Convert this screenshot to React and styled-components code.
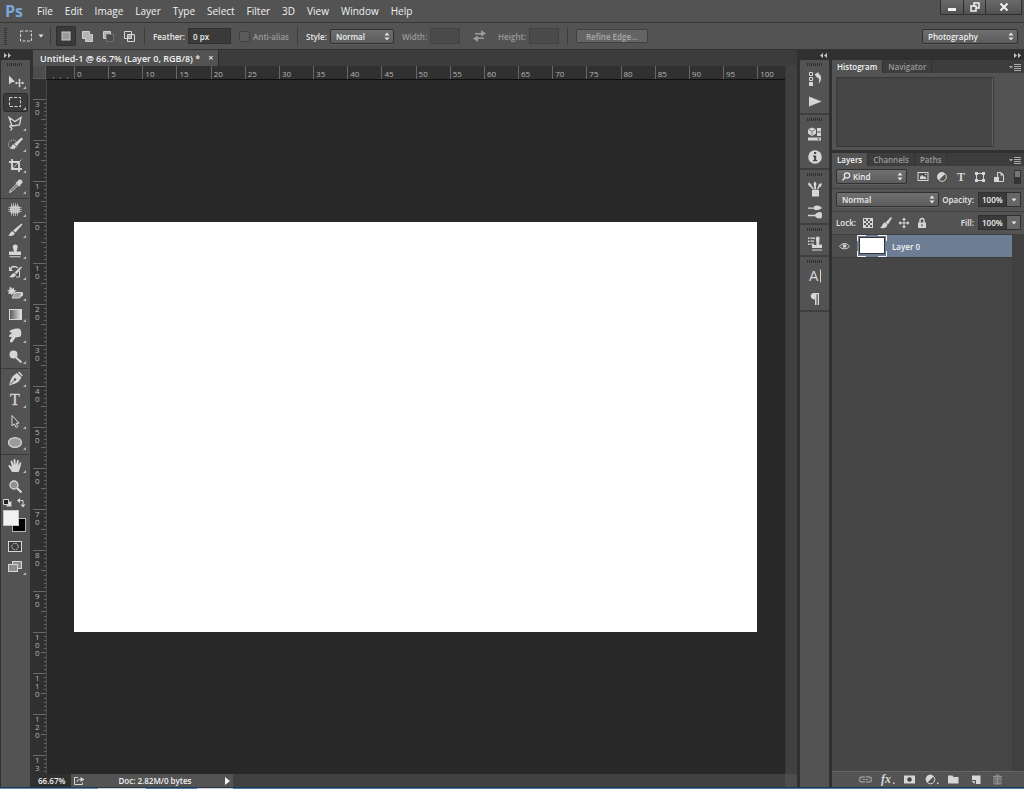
import React, { useState } from "react"
import styled, { createGlobalStyle, css } from "styled-components"

const GlobalStyle = createGlobalStyle`
    * {
        box-sizing: border-box;
    }
    body {
        margin: 0;
        background: #282828;
        color: #e0e0e0;
        font-family: "Open Sans", "Noto Sans", sans-serif;
        font-size: 8px;
    }
    button, input, select {
        font: inherit;
        color: inherit;
        margin: 0;
        padding: 0;
        border: 0;
        background: none;
        border-radius: 0;
    }
    svg {
        display: block;
        flex: none;
    }
`

const Window = styled.div`
    display: flex;
    flex-direction: column;
    height: 100vh;
    overflow: hidden;
`

/* menu bar */
const MenuBar = styled.header`
    display: flex;
    align-items: center;
    flex: none;
    height: 22px;
    background: #535353;
`
const Logo = styled.span`
    width: 31px;
    padding-left: 5px;
    color: #7ba7d7;
    font-family: "Open Sans", sans-serif;
    font-size: 16px;
    font-weight: 700;
    line-height: 20px;
`
const Menu = styled.nav`
    display: flex;
    flex: 1;
`
const MenuItem = styled.button`
    padding: 0 6px;
    font-size: 10px;
    line-height: 20px;
    color: #f2f2f2;
`
const WindowButtons = styled.div`
    display: flex;
    align-self: flex-start;
    margin-right: 2px;
    border: 1px solid #2f2f2f;
    border-top: 0;
`
const WindowButton = styled.button`
    display: grid;
    place-items: center;
    width: ${p => p.$wide ? "36px" : "22px"};
    height: 14px;
    background: linear-gradient(#6a6a6a, #525252);
    & + & {
        border-left: 1px solid #2f2f2f;
    }
`

/* options bar */
const OptionsBar = styled.div`
    display: flex;
    align-items: center;
    flex: none;
    height: 27px;
    padding: 0 6px 0 4px;
    border-top: 1px solid #383838;
    background: #535353;
    font-weight: 600;
    white-space: nowrap;
`
const OptionGroup = styled.div`
    display: flex;
    align-items: center;
    gap: ${p => p.$gap || "3px"};
    padding: 0 ${p => p.$pad || "8px"};
    height: 18px;
    & + & {
        border-left: 1px solid #3c3c3c;
    }
`
const Grip = styled.span`
    width: 3px;
    height: 17px;
    background: repeating-linear-gradient(#333 0 1px, #535353 1px 2px);
`
const ModeButton = styled.button`
    display: grid;
    place-items: center;
    width: 20px;
    height: 20px;
    border-radius: 2px;
    ${p => p.$active && css`
        background: #3a3a3a;
        box-shadow: inset 0 0 0 1px #2f2f2f;
    `}
`
const Label = styled.label`
    color: ${p => p.$dim ? "#9a9a9a" : "#e8e8e8"};
    font-weight: 600;
`
const Field = styled.input`
    width: ${p => p.$width || "30px"};
    height: 16px;
    padding: 0 4px;
    border: 1px solid #303030;
    background: #3a3a3a;
    color: #f0f0f0;
    &:disabled {
        background: #4b4b4b;
        border-color: #424242;
    }
`
const Check = styled.input`
    appearance: none;
    width: 11px;
    height: 11px;
    border: 1px solid #424242;
    border-radius: 2px;
    background: #5a5a5a;
`
const SelectBox = styled.span`
    display: grid;
    align-items: center;
    width: ${p => p.$width};
    height: 15px;
    border: 1px solid #303030;
    border-radius: 2px;
    background: linear-gradient(#707070, #5c5c5c);
    box-shadow: 0 1px 0 #606060;
    & > * {
        grid-area: 1 / 1;
    }
    & > svg {
        justify-self: end;
        margin-right: 3px;
        pointer-events: none;
    }
    & > svg:first-child {
        justify-self: start;
        margin-left: 5px;
    }
`
const SelectInput = styled.select`
    appearance: none;
    width: 100%;
    height: 13px;
    padding-left: ${p => p.$indent || "5px"};
    color: #f0f0f0;
    font-weight: 600;
    outline: 0;
    option {
        background: #535353;
    }
`
const PushButton = styled.button`
    width: 72px;
    height: 14px;
    border: 1px solid #404040;
    border-radius: 2px;
    background: #646464;
    color: #a8a8a8;
`
const Spacer = styled.span`
    flex: 1 0 2px;
`

/* work area */
const Workspace = styled.main`
    display: flex;
    flex: 1;
    min-height: 0;
    border-top: 1px solid #323232;
    background: #303030;
`
const ToolColumn = styled.aside`
    display: flex;
    flex-direction: column;
    flex: none;
    width: 33px;
    padding: 0 3px 0 1px;
`
const CollapseBar = styled.div`
    display: flex;
    align-items: center;
    justify-content: space-between;
    flex: none;
    height: 10px;
    padding: 0 3px;
`
const CollapseButton = styled.button`
    display: grid;
    place-items: center;
    height: 10px;
    margin-left: ${p => p.$shift || "0"};
`
const Tools = styled.div`
    display: flex;
    flex-direction: column;
    align-items: flex-start;
    flex: 1;
    background: #535353;
`
const HGrip = styled.span`
    width: 16px;
    height: 3px;
    margin: ${p => p.$margin || "0 0 1px"};
    background: repeating-linear-gradient(90deg, #2f2f2f 0 1px, #535353 1px 2px);
`
const ToolGroup = styled.div`
    padding-bottom: 1px;
    & + & {
        border-top: 1px solid #3a3a3a;
    }
`
const ToolButton = styled.button`
    display: block;
    width: 28px;
    height: 21px;
    svg rect.well {
        display: ${p => p.$active ? "inline" : "none"};
    }
`

const DocumentColumn = styled.section`
    display: flex;
    flex-direction: column;
    flex: 1;
    min-width: 0;
`
const TabStrip = styled.div`
    display: flex;
    flex: none;
    height: 16px;
    background: #3c3c3c;
`
const DocumentTab = styled.div`
    display: flex;
    align-items: center;
    gap: 8px;
    padding: 0 5px 0 7px;
    background: #535353;
    border-right: 1px solid #2c2c2c;
    color: #f2f2f2;
    font-size: 9px;
    font-weight: 600;
    white-space: nowrap;
`
const TabClose = styled.button`
    font-size: 9px;
    line-height: 14px;
`
const Stage = styled.div`
    display: grid;
    grid-template-columns: 14px minmax(0, 1fr) 12px;
    grid-template-rows: 14px minmax(0, 1fr);
    flex: 1;
    min-height: 0;
    background: #303030;
`
const RulerCorner = styled.div`
    margin: 0 1px 1px 0;
    background: #4c4c4c;
    border-right: 1px dotted #6b6b6b;
    border-bottom: 1px dotted #6b6b6b;
`
const TopRuler = styled.div`
    display: flex;
    border-bottom: 1px solid #0f0f0f;
    overflow: hidden;
    color: #b4b4b4;
    font-size: 8px;
`
const TopCell = styled.div`
    display: grid;
    flex: ${p => p.$last ? "none" : "1"};
    width: ${p => p.$last ? "28px" : "auto"};
    min-width: 0;
    border-left: 1px solid #686868;
    & > * {
        grid-area: 1 / 1;
    }
`
const TopLabel = styled.span`
    z-index: 1;
    padding-left: 2px;
    line-height: 16px;
`
const TopTicks = styled.span`
    display: flex;
    align-self: end;
    width: ${p => p.$width || "auto"};
    height: 2px;
    i {
        flex: 1;
    }
    i + i {
        border-left: 1px solid #686868;
    }
`
const SideRuler = styled.div`
    padding-top: 19px;
    overflow: hidden;
    border-right: 1px solid #484848;
    color: #b4b4b4;
    font-size: 8px;
`
const SideCell = styled.div`
    display: flex;
    justify-content: space-between;
    height: 41px;
    border-top: 1px solid #686868;
`
const SideLabel = styled.span`
    width: 5px;
    margin-left: 2px;
    line-height: 8px;
    word-break: break-all;
`
const SideTicks = styled.span`
    display: flex;
    flex-direction: column;
    align-items: flex-end;
    i {
        flex: 1;
        width: 2px;
    }
    i + i {
        border-top: 1px solid #686868;
    }
    i:nth-child(6) {
        width: 5px;
    }
`
const Canvas = styled.div`
    display: flex;
    align-items: center;
    padding: 0 28px 0 27px;
    background: #282828;
`
const Artboard = styled.div`
    flex: 1;
    aspect-ratio: 5 / 3;
    background: #fff;
`
const ScrollTrack = styled.div`
    grid-row: 1 / 3;
    grid-column: 3;
    background: #404040;
    border-left: 1px solid #383838;
`
const StatusBar = styled.footer`
    display: flex;
    flex: none;
    height: 13px;
    background: #404040;
    color: #f0f0f0;
    font-weight: 600;
    line-height: 12px;
`
const ZoomLevel = styled.input`
    width: 38px;
    padding-left: 5px;
    background: #303030;
`
const DocInfo = styled.div`
    display: flex;
    align-items: center;
    justify-content: space-between;
    width: 162px;
    padding: 0 3px 0 2px;
    background: #535353;
`
const ResizeCorner = styled.span`
    width: 12px;
    margin-left: auto;
    background: #4d4d4d;
`

/* right side */
const Docks = styled.aside`
    display: flex;
    flex-direction: column;
    flex: none;
    width: 227px;
    padding-left: 3px;
`
const DockRow = styled.div`
    display: flex;
    flex: 1;
    gap: 3px;
    min-height: 0;
`
const IconDock = styled.div`
    width: 29px;
    background: #535353;
`
const DockGroup = styled.div`
    display: flex;
    flex-direction: column;
    align-items: center;
    padding-top: 3px;
    border-bottom: 2px solid #3f3f3f;
`
const DockButton = styled.button`
    display: grid;
    place-items: center;
    width: 27px;
    height: 23px;
`
const Panels = styled.div`
    display: flex;
    flex-direction: column;
    flex: 1;
    min-width: 0;
    gap: 3px;
`
const Panel = styled.section`
    display: flex;
    flex-direction: column;
    flex: ${p => p.$grow ? "1" : "none"};
    min-height: 0;
    background: #535353;
`
const PanelTabs = styled.div`
    display: flex;
    align-items: center;
    flex: none;
    height: 13px;
    padding-right: 3px;
    background: #3d3d3d;
`
const PanelTab = styled.button`
    height: 13px;
    padding: 0 5px;
    border-right: 1px solid #333;
    background: ${p => p.$active ? "#535353" : "none"};
    color: ${p => p.$active ? "#f4f4f4" : "#9a9a9a"};
    font-weight: 600;
`
const HistogramBox = styled.div`
    width: 158px;
    height: 70px;
    margin: 4px 4px 3px;
    border: 1px solid #3a3a3a;
    background: #464646;
    box-shadow: inset -1px 0 0 #5c6658, inset 0 0 0 1px #424242;
`
const LayerRow = styled.div`
    display: flex;
    align-items: center;
    justify-content: space-between;
    flex: none;
    height: 23px;
    padding: 0 3px 1px 4px;
    border-bottom: 1px solid #404040;
`
const Inline = styled.div`
    display: flex;
    align-items: center;
    gap: ${p => p.$gap || "4px"};
`
const IconButton = styled.button`
    display: grid;
    place-items: center;
    opacity: ${p => p.$dim ? "0.5" : "1"};
`
const NumberBox = styled.span`
    display: flex;
    height: 15px;
    border: 1px solid #303030;
    input {
        width: 27px;
        padding-left: 3px;
        background: #3a3a3a;
        color: #f4f4f4;
        font-weight: 600;
    }
    button {
        display: grid;
        place-items: center;
        width: 14px;
        background: #666;
        border-left: 1px solid #303030;
    }
`
const LayerList = styled.ul`
    flex: 1;
    min-height: 0;
    margin: 0;
    padding: 0;
    list-style: none;
    background: #464646;
    border-right: 12px solid #404040;
`
const LayerItem = styled.li`
    display: flex;
    align-items: center;
    height: 23px;
    border-bottom: 1px solid #3a3a3a;
    background: #6d7d93;
    color: #f4f4f4;
    font-weight: 600;
`
const EyeCell = styled.button`
    display: grid;
    place-items: center;
    width: 25px;
    height: 22px;
    background: #4d4d4d;
`
const Thumb = styled.svg`
    margin-right: 5px;
`
const PanelFooter = styled.div`
    display: flex;
    align-items: center;
    justify-content: flex-end;
    flex: none;
    gap: 7px;
    height: 16px;
    padding-right: 19px;
    border-top: 1px solid #656565;
`
const TaskbarEdge = styled.div`
    flex: none;
    height: 2px;
    border-top: 1px solid #253748;
    background: linear-gradient(90deg, #5d8fb8 0 98px, #c9ccd4 98px 146px, #4f81ae 146px 197px, #c9ccd4 197px 233px, #4a7dab 233px);
`

const L = "#d6d6d6"

const Arrows = () => (
  <svg width="6" height="9" viewBox="0 0 6 9" fill="#e4e4e4"><path d="M.5 3.500 3 .5 5.500 3.500zM.5 5.500 3 8.500 5.500 5.500z" /></svg>
)
const Down = () => (
  <svg width="6" height="4" viewBox="0 0 6 4" fill="#e4e4e4"><path d="M.5 .5h5L3 3.500z" /></svg>
)
const Chevrons = ({ left }) => (
  <svg width="7" height="5" viewBox="0 0 7 5" fill="#c4c4c4">
    <path d={left ? "M3 0v5L0 2.500zM7 0v5L4 2.500z" : "M0 0v5l3-2.500zM4 0v5l3-2.500z"} />
  </svg>
)
const PanelMenuIcon = () => (
  <svg width="12" height="8" viewBox="0 0 12 8" fill="#aaa"><path d="M0 3h4L2 5.500zM5 1h7v1H5zM5 3h7v1H5zM5 5h7v1H5zM5 7h7v1H5z" /></svg>
)

const BrushShape = () => (
  <g fill={L}>
    <path d="M20.500 3.500 21.500 4.500 14.500 12.500 12 10.500z" />
    <path d="M11.500 11.200 13.800 13.200C13 16 10 16.500 7 15.500c2-.5 2-4 4.500-4.300z" />
  </g>
)

const toolGroups = [
  [
    { name: "Move", icon: <><path d="M8 4.500v9l2.200-2 3.800-.8z" fill={L} /><path d="M18.500 8v8M14.500 12h8" stroke={L} /><path d="M17 9.500 18.500 7.500 20 9.500zM17 14.500l1.500 2 1.500-2zM16 10.500 14 12l2 1.500zM21 10.500l2 1.500-2 1.500z" fill={L} /></> },
    { name: "Rectangular Marquee", icon: <rect x="8.500" y="5.500" width="11" height="9" fill="none" stroke={L} strokeDasharray="3 1.600" /> },
    { name: "Polygonal Lasso", icon: <path d="M8 4.500 14 8.500 20 4.500 18.500 12 11 13zM11 13c-2-1.500-3 1-1 1.500 1.500.5 1 1.500-.5 3" fill="none" stroke={L} strokeWidth="1.300" /> },
    { name: "Quick Selection", icon: <><circle cx="12" cy="10.500" r="4.500" fill="none" stroke={L} strokeDasharray="1 1.300" /><path d="M20.500 3.500 22 5 15.500 12 13 10zM12.500 10.200l2.500 2.200c-1 2.300-3 2.800-6.500 1.800 2-.5 2-3.500 4-4z" fill={L} /></> },
    { name: "Crop", icon: <><path d="M11 4v10h10M8 7h10v10" fill="none" stroke={L} strokeWidth="1.800" /><path d="M20.500 4.500l-9 9" stroke={L} strokeWidth=".8" /></> },
    { name: "Eyedropper", icon: <><path d="M17 4.500c1-1.500 3-1.500 4 0s.5 2.500-.8 3.500l-1.200 1 .5.800-1 1-4-4 1-1 .7.500z" fill={L} /><path d="M15.500 8 17 9.500 11 15.500 8.500 16.500 9.500 14z" fill="#777" stroke={L} strokeWidth=".9" /></> },
  ],
  [
    { name: "Patch", icon: <><rect x="9" y="6.500" width="10" height="8" rx="3" fill="#b4b4b4" /><path d="M10.500 4.500v12M12.500 4v13M14.500 4v13M16.500 4.500v12M7.500 8.500h13M7 10.500h14M7.500 12.500h13" stroke="#d0d0d0" strokeWidth=".7" /></> },
    { name: "Brush", icon: <BrushShape /> },
    { name: "Clone Stamp", icon: <path d="M12 7a2.500 2.500 0 1 1 4.500 0L15.500 10.500H20V14H8v-3.500h5zM8.500 15.200h11v1h-11z" fill={L} /> },
    { name: "History Brush", icon: <><path d="M9.500 6.500C11 4.500 14 4 17 6" fill="none" stroke={L} strokeWidth="1.300" /><path d="M8 4.500v4.500h4z" fill={L} /><path d="M20 4.500 21 5.500 15.500 12 13.500 10.500zM13 11l2 1.800c-1 3-4 3-7 2.200 2-.5 2.500-3.500 5-4z" fill={L} /><path d="M18.500 9v6h-3.500" fill="none" stroke={L} /></> },
    { name: "Background Eraser", icon: <><path d="M10 4l1 2 2-1.500v2.500l2.500.500-2 1.500 1 2-2.500-.5-1 2-1.500-2-2.500.5 1-2.200L6 7.500l2.500-.5V4.500z" fill={L} /><path d="M14.500 9.500H21L18.500 15H11z" fill="#a0a0a0" stroke={L} /><path d="M18.500 15 22 12.500V9.500h-1z" fill={L} /></> },
    { name: "Gradient", icon: <><defs><linearGradient id="grad"><stop offset="0" stopColor="#555" /><stop offset="1" stopColor="#e8e8e8" /></linearGradient></defs><rect x="8.500" y="5.500" width="12" height="10" fill="url(#grad)" stroke={L} /></> },
    { name: "Smudge", icon: <path d="M8.500 6C11 4 15 3 19 4l.5 1c1 1.500 1 4 .5 5.500-.5 1-1.500 1.500-2.500 1.500l-3 .5-3 4.500c-1.500 1-3 0-2.500-1.500l2-4c-1.500 1-3.500.5-3-1l3.500-3-2 .3z" fill={L} /> },
    { name: "Dodge", icon: <><circle cx="12.500" cy="8.500" r="4" fill={L} /><path d="M15 11.500l5.500 5" stroke={L} strokeWidth="1.800" /></> },
  ],
  [
    { name: "Pen", icon: <><path d="M16 4 20.500 8.500 19 10.500C18 13.500 14 15 8 16.500 9.500 11 11 7 14 5.500zM17 3.500 18.200 2.500 21.800 6.500 20.800 7.500z" fill={L} /><path d="M9 15.500 13.500 11" stroke="#535353" /><circle cx="14" cy="10.500" r="1.200" fill="#535353" /></> },
    { name: "Horizontal Type", letter: true },
    { name: "Path Selection", icon: <path d="M11 4.500v10.500l2.300-2.200 1.700 3.700 1.800-.8-1.600-3.500H18z" fill="#4b4b4b" stroke={L} /> },
    { name: "Ellipse", icon: <ellipse cx="14" cy="10.500" rx="6.500" ry="4.800" fill="#9c9c9c" stroke={L} strokeWidth="1.200" /> },
  ],
  [
    { name: "Hand", icon: <path d="M11 17C10 15 8 12.500 7.300 11c0-1.200 1.200-1.200 2-.3L11 12 9.600 6.500c0-1.200 1.500-1.200 1.800 0L12.700 10 12.600 4.800c.2-1.200 1.700-1.200 1.800 0L14.800 10l1.300-4.500c.5-1 1.800-.6 1.700.5L17 10.700l1.800-3c.7-.8 1.800-.1 1.400.8C19.500 11 19 14.500 17.500 17z" fill={L} /> },
    { name: "Zoom", icon: <><circle cx="13" cy="9" r="4" fill="#8f8f8f" stroke={L} strokeWidth="1.300" /><path d="M16 12l4.500 4.500" stroke={L} strokeWidth="2.200" /></>, plain: true },
  ],
]

const Tool = ({ tool, active, onClick }) => (
  <ToolButton type="button" aria-label={tool.name} $active={active} onClick={onClick}>
    <svg width="28" height="21" viewBox="0 0 28 21">
      <rect className="well" x="2.500" y="1.500" width="24" height="18" rx="2" fill="#3a3a3a" stroke="#2c2c2c" />
      {tool.letter ? <text x="14" y="15" textAnchor="middle" fontFamily="Liberation Serif, serif" fontSize="16" fill={L} stroke={L} strokeWidth=".3">T</text> : tool.icon}
      {!tool.plain && <path d="M25 15v3h-3z" fill="#b8b8b8" />}
    </svg>
  </ToolButton>
)

const dockGroups = [
  [
    ["History", <><path d="M2.500 1.500h3v3h-3zM2.500 6.500h3v3h-3z" fill="none" stroke={L} /><path d="M2 11h4v4H2zM7.500 3.500 11.500 1v2c3.500 1 3.500 7 0 9.500 1-3 1-5.500 0-6v1.500z" fill={L} /></>],
    ["Actions", <path d="M2 2.500v10l12.500-5z" fill={L} />],
  ],
  [
    ["Properties", <><path d="M5 2 8.500 3.500v4L5 9.500 1.500 7.500v-4z" fill={L} stroke={L} /><path d="M1.500 3.500 5 5.300l3.500-1.800M5 5.300v4" fill="none" stroke="#666" strokeWidth=".8" /><path d="M10 2h4v3.500h-4zM10 6.500h4V10h-4zM1 11.500h13v3H1z" fill={L} /><path d="M10 12.500h3l-1.500 1.500z" fill="#444" /></>],
    ["Info", <><circle cx="8" cy="8" r="6.800" fill={L} /><path d="M7 3h2.200v2H7zM6 6.500h3.200V11h1v1.200H6V11h1V7.700H6z" fill="#484848" /></>],
  ],
  [
    ["Brush Presets", <path d="M5 9h7v6.500H5zM6 8.500 2.500 5C1 4.500 1 3 1.500 1.500 3 2.500 4.500 2.500 4.500 4.500l3 4zM7.500 8.500 7 4.500C6 3 7 1.500 8 .5c1 1 2 2.500 1 4v4zM9.500 8.500l2-3.500c-.5-2 1.500-2 3-3 .5 2 0 4-2 4.200l-1.500 2.300z" fill={L} />],
    ["Brush", <path d="M1 3.500h6V2.300c3-1.300 5-.8 8 1.700-3 2.300-5 2.500-8 1.500V4.700H1zM1 10.700h7c1-1.700 3-2.700 5-2.700 1.500 0 2 1 2 3.200s-.5 3.300-2 3.300c-2 0-4-1-5-2.300H1z" fill={L} />],
  ],
  [
    ["Clone Source", <path d="M1 1.500h1.500V3H1zM3.500 1.500H8v1.200H3.500zM1 4.500h1.500V6H1zM3.500 4.500H7v1.200H3.500zM1 7.500h1.500V9H1zM3.500 7.500H7v1.200H3.500zM9 3.500a2 2 0 1 1 3.500 0L12 8.500h3V12H5V9h4.500zM5 13.500h10v1H5z" fill={L} />],
  ],
  [
    ["Character", <><text x="2" y="13" fontFamily="Liberation Sans, sans-serif" fontSize="14" fill={L}>A</text><path d="M13.500 1.500v13" stroke={L} /></>],
    ["Paragraph", <path d="M12 2v12h-1.300V3.200H9.500V14H8V8.500C2.500 8.500 2.500 2 7 2z" fill={L} />],
  ],
]

const modes = [
  ["New selection", <rect x="2" y="2" width="8" height="8" fill="#999" stroke="#c8c8c8" />],
  ["Add to selection", <><path d="M1.500 1.500h7v3h3v7h-7v-3h-3z" fill="#b4b4b4" stroke="#d0d0d0" /></>],
  ["Subtract from selection", <><path d="M1.500 8.500v-7h7v3h-4v4z" fill="#b4b4b4" stroke="#d0d0d0" /><path d="M4.500 4.500h7v7h-7z" fill="#4c4c4c" stroke="#707070" /></>],
  ["Intersect with selection", <><path d="M1.500 1.500h7v7h-7zM4.500 4.500h7v7h-7z" fill="none" stroke={L} /><path d="M5 5h3v3H5z" fill="#aaa" /></>],
]

const filters = [
  ["Pixel layers", <><rect x="1" y="1.500" width="10" height="8" fill="none" stroke={L} /><path d="M3 8V6l2-2 2 2 1-1 1.500 3zM8 3h1.500v1H8z" fill={L} /></>],
  ["Adjustment layers", <><circle cx="6" cy="6" r="4.300" fill="#535353" stroke={L} /><path d="M3 9A4.300 4.300 0 1 1 9 3z" fill={L} /></>],
  ["Type layers", <text x="6" y="10" textAnchor="middle" fontFamily="Liberation Serif, serif" fontWeight="bold" fontSize="12" fill={L}>T</text>],
  ["Shape layers", <><path d="M2.500 2.500h7v7h-7z" fill="none" stroke={L} /><path d="M1 1h3v3H1zM8 1h3v3H8zM1 8h3v3H1zM8 8h3v3H8z" fill={L} /></>],
  ["Smart objects", <><path d="M4.500 1.500H8L10.500 4v6.500h-6z" fill="none" stroke={L} /><path d="M1 6h5v5H1zM7.500 1v3.500H11z" fill={L} /></>],
]

const locks = [
  ["Lock transparent pixels", <><rect x="1" y="1" width="10" height="10" fill={L} /><path d="M2 2h2v2H2zM6 2h2v2H6zM4 4h2v2H4zM8 4h2v2H8zM2 6h2v2H2zM6 6h2v2H6zM4 8h2v2H4zM8 8h2v2H8z" fill="#555" /></>],
  ["Lock image pixels", <path d="M11 0 12 1 8 7.500 5.500 5.500zM5 5.500l2.500 2.200C7 11 3 12 0 10.800 2.500 10 2 6 5 5.500z" fill={L} />],
  ["Lock position", <><path d="M6 1.500v9M1.500 6h9" stroke={L} /><path d="M4 3 6 .5 8 3zM4 9l2 2.500L8 9zM3 4 .5 6 3 8zM9 4l2.500 2L9 8z" fill={L} /></>],
  ["Lock all", <><path d="M4 6V3.500a2 2 0 0 1 4 0V6" fill="none" stroke={L} strokeWidth="1.400" /><path d="M2 5.500h8V11H2z" fill={L} /><path d="M5.500 7h1v2.500h-1z" fill="#444" /></>],
]

const footerIcons = [
  ["Link layers", <><path d="M7 4H4a2.500 2.500 0 0 0 0 5h3M8 4h3a2.500 2.500 0 0 1 0 5H8" fill="none" stroke={L} strokeWidth="1.400" /><path d="M4.500 6.500h6" stroke={L} /></>, true],
  ["Add a layer style", <><text x="1" y="10" fontFamily="Liberation Serif, serif" fontStyle="italic" fontWeight="bold" fontSize="12" fill={L}>fx</text><path d="M13 9.500h1.500V11H13z" fill={L} /></>],
  ["Add layer mask", <><rect x="2" y="2.500" width="11" height="8" fill={L} /><circle cx="7.500" cy="6.500" r="2.300" fill="#444" /></>],
  ["New adjustment layer", <><circle cx="6.500" cy="6.500" r="4.300" fill="#535353" stroke={L} /><path d="M3.500 9.500a4.300 4.300 0 1 1 6-6z" fill={L} /><path d="M13 9.500h1.500V11H13z" fill={L} /></>],
  ["New group", <path d="M2 2.500h4.500L7.500 4h5v6.500H2z" fill={L} />],
  ["New layer", <><path d="M4 2.500h8.500v8.500H8V7H4z" fill={L} /><path d="M3.500 8h3.300v3z" fill={L} /></>],
  ["Delete layer", <path d="M3 3.500h9M6 3V2h3v1M4 5h7v6H4zM6 5v6M7.500 5v6M9 5v6" fill="none" stroke={L} />, true],
]

const Dropdown = ({ id, label, width, options, icon, indent }) => (
  <SelectBox $width={width}>
    {icon}
    <SelectInput id={id} aria-label={label} $indent={indent}>
      {options.map(o => <option key={o}>{o}</option>)}
    </SelectInput>
    <Arrows />
  </SelectBox>
)

const menus = ["File", "Edit", "Image", "Layer", "Type", "Select", "Filter", "3D", "View", "Window", "Help"]
const topMarks = Array.from({ length: 21 }, (_, i) => i * 5)
const sideMarks = [30, 20, 10, 0, 10, 20, 30, 40, 50, 60, 70, 80, 90, 100, 110, 120, 130]

function App() {
  const [tool, setTool] = useState("Rectangular Marquee")
  const [mode, setMode] = useState("New selection")

  return (
    <Window>
      <GlobalStyle />
      <MenuBar>
        <Logo>Ps</Logo>
        <Menu>
          {menus.map(m => <MenuItem key={m} type="button">{m}</MenuItem>)}
        </Menu>
        <WindowButtons>
          <WindowButton type="button" aria-label="Minimize">
            <svg width="10" height="10" viewBox="0 0 10 10"><path d="M1 6h8v3H1z" fill="#f2f2f2" /></svg>
          </WindowButton>
          <WindowButton type="button" aria-label="Restore">
            <svg width="10" height="10" viewBox="0 0 10 10" fill="none" stroke="#f2f2f2" strokeWidth="1.500"><path d="M4 4V1h5v5H6.500M1 4h5v5H1z" /></svg>
          </WindowButton>
          <WindowButton type="button" aria-label="Close" $wide>
            <svg width="10" height="10" viewBox="0 0 10 10" stroke="#f2f2f2" strokeWidth="2"><path d="M1.500 1.500l7 7M8.500 1.500l-7 7" /></svg>
          </WindowButton>
        </WindowButtons>
      </MenuBar>

      <OptionsBar>
        <Grip />
        <OptionGroup $gap="5px" $pad="6px">
          <svg width="20" height="12" viewBox="0 0 20 12"><rect x="7.500" y="1" width="11" height="10" fill="none" stroke={L} strokeDasharray="3 1.500" /></svg>
          <Down />
        </OptionGroup>
        <OptionGroup $gap="1px" $pad="5px">
          {modes.map(([name, icon]) => (
            <ModeButton key={name} type="button" aria-label={name} $active={mode === name} onClick={() => setMode(name)}>
              <svg width="13" height="13" viewBox="0 0 13 13">{icon}</svg>
            </ModeButton>
          ))}
        </OptionGroup>
        <OptionGroup>
          <Label htmlFor="feather">Feather:</Label>
          <Field id="feather" $width="43px" defaultValue="0 px" />
          <Spacer />
          <Check id="alias" type="checkbox" disabled />
          <Label htmlFor="alias" $dim>Anti-alias</Label>
        </OptionGroup>
        <OptionGroup>
          <Label htmlFor="style">Style:</Label>
          <Dropdown id="style" width="64px" options={["Normal", "Fixed Ratio", "Fixed Size"]} />
          <Spacer />
          <Label htmlFor="w" $dim>Width:</Label>
          <Field id="w" disabled />
          <IconButton type="button" aria-label="Swap height and width">
            <svg width="32" height="12" viewBox="0 0 32 12" fill="#9c9c9c"><path d="M12 3h6V0l5 3.500-5 3V4.500h-6zM21 7.500h-6V5.500l-5 3 5 3.500V9h6z" /></svg>
          </IconButton>
          <Label htmlFor="h" $dim>Height:</Label>
          <Field id="h" disabled />
        </OptionGroup>
        <OptionGroup>
          <PushButton type="button">Refine Edge...</PushButton>
        </OptionGroup>
        <Spacer />
        <Dropdown label="Workspace" width="96px" options={["Photography", "Essentials", "Painting"]} />
      </OptionsBar>

      <Workspace>
        <ToolColumn>
          <CollapseBar><CollapseButton type="button" aria-label="Expand tools"><Chevrons /></CollapseButton></CollapseBar>
          <Tools>
            <HGrip $margin="3px 0 5px 6px" />
            {toolGroups.map((group, i) => (
              <ToolGroup key={i}>
                {group.map(t => <Tool key={t.name} tool={t} active={tool === t.name} onClick={() => setTool(t.name)} />)}
              </ToolGroup>
            ))}
            <svg width="28" height="38" viewBox="0 0 28 38">
              <path d="M5.500 3.500h5v5h-5z" fill="#ddd" stroke="#888" />
              <path d="M2.500 1.500h5v5h-5z" fill="#222" stroke={L} />
              <path d="M18.500 2.500h3.500v4" fill="none" stroke={L} /><path d="M16 2.500 19 0v5zM22 9.500 19.500 6.500h5z" fill={L} />
              <rect x="11.500" y="20.500" width="13" height="13" fill="#000" stroke="#b4b4b4" />
              <rect x="2.500" y="12.500" width="15" height="15" fill="#f2f2f2" stroke="#c4c4c4" />
            </svg>
            <Tool tool={{ name: "Quick Mask", plain: true, icon: <><rect x="7.500" y="5.500" width="13" height="10" fill="#3c3c3c" stroke={L} /><circle cx="14" cy="10.500" r="3.200" fill="none" stroke={L} strokeDasharray="1.500 1" /></> }} />
            <Tool tool={{ name: "Screen Mode", icon: <><rect x="11.500" y="4.500" width="9" height="7" fill="#8c8c8c" stroke={L} /><rect x="7.500" y="7.500" width="9" height="7" fill="#8c8c8c" stroke={L} /></> }} />
          </Tools>
        </ToolColumn>

        <DocumentColumn>
          <TabStrip>
            <DocumentTab>
              Untitled-1 @ 66.7% (Layer 0, RGB/8) *
              <TabClose type="button" aria-label="Close document">×</TabClose>
            </DocumentTab>
          </TabStrip>
          <Stage>
            <RulerCorner />
            <TopRuler>
              <TopTicks $width="27px"><i /><i /><i /><i /></TopTicks>
              {topMarks.map(m => (
                <TopCell key={m} $last={m === 100}>
                  <TopLabel>{m}</TopLabel>
                  <TopTicks><i /><i /><i /><i /><i /></TopTicks>
                </TopCell>
              ))}
            </TopRuler>
            <ScrollTrack />
            <SideRuler>
              {sideMarks.map((m, i) => (
                <SideCell key={i}>
                  <SideLabel>{m}</SideLabel>
                  <SideTicks><i /><i /><i /><i /><i /><i /><i /><i /><i /><i /></SideTicks>
                </SideCell>
              ))}
            </SideRuler>
            <Canvas><Artboard /></Canvas>
          </Stage>
          <StatusBar>
            <ZoomLevel aria-label="Zoom level" defaultValue="66.67%" />
            <DocInfo>
              <svg width="12" height="10" viewBox="0 0 12 10"><path d="M5 1.500H1.500v7h8V6.500M4 6c0-2 1.500-2.500 4-2.500" fill="none" stroke={L} /><path d="M7.500 1 11.500 3.500 7.500 6z" fill={L} /></svg>
              <span>Doc: 2.82M/0 bytes</span>
              <IconButton type="button" aria-label="Status options"><svg width="5" height="8" viewBox="0 0 5 8" fill="#f2f2f2"><path d="M0 0v8l5-4z" /></svg></IconButton>
            </DocInfo>
            <ResizeCorner />
          </StatusBar>
        </DocumentColumn>

        <Docks>
          <CollapseBar>
            <CollapseButton type="button" aria-label="Expand dock" $shift="17px"><Chevrons left /></CollapseButton>
            <CollapseButton type="button" aria-label="Collapse panels"><Chevrons /></CollapseButton>
          </CollapseBar>
          <DockRow>
            <IconDock>
              {dockGroups.map((group, i) => (
                <DockGroup key={i}>
                  <HGrip />
                  {group.map(([name, icon]) => (
                    <DockButton key={name} type="button" aria-label={name}>
                      <svg width="16" height="16" viewBox="0 0 16 16">{icon}</svg>
                    </DockButton>
                  ))}
                </DockGroup>
              ))}
            </IconDock>
            <Panels>
              <Panel>
                <PanelTabs>
                  <PanelTab type="button" $active>Histogram</PanelTab>
                  <PanelTab type="button">Navigator</PanelTab>
                  <Spacer />
                  <IconButton type="button" aria-label="Histogram menu"><PanelMenuIcon /></IconButton>
                </PanelTabs>
                <HistogramBox />
              </Panel>
              <Panel $grow>
                <PanelTabs>
                  <PanelTab type="button" $active>Layers</PanelTab>
                  <PanelTab type="button">Channels</PanelTab>
                  <PanelTab type="button">Paths</PanelTab>
                  <Spacer />
                  <IconButton type="button" aria-label="Layers menu"><PanelMenuIcon /></IconButton>
                </PanelTabs>
                <LayerRow>
                  <Dropdown
                    label="Filter type"
                    width="71px"
                    indent="16px"
                    options={["Kind", "Name", "Effect"]}
                    icon={<svg width="9" height="9" viewBox="0 0 9 9" fill="none" stroke="#eee" strokeWidth="1.200"><circle cx="5" cy="3.500" r="2.700" /><path d="M3 5.500.5 8.500" /></svg>}
                  />
                  <Inline $gap="7px">
                    {filters.map(([name, icon]) => (
                      <IconButton key={name} type="button" aria-label={name}><svg width="12" height="12" viewBox="0 0 12 12">{icon}</svg></IconButton>
                    ))}
                  </Inline>
                  <IconButton type="button" aria-label="Layer filtering">
                    <svg width="7" height="14" viewBox="0 0 7 14"><path d="M0 0h7v14H0z" fill="#333" /><path d="M1 1h5v6H1z" fill="#777" /></svg>
                  </IconButton>
                </LayerRow>
                <LayerRow>
                  <Dropdown label="Blend mode" width="103px" options={["Normal", "Dissolve", "Multiply"]} />
                  <Inline>
                    <Label htmlFor="opacity">Opacity:</Label>
                    <NumberBox><input id="opacity" defaultValue="100%" /><button type="button" aria-label="Opacity slider"><Down /></button></NumberBox>
                  </Inline>
                </LayerRow>
                <LayerRow>
                  <Inline $gap="6px">
                    <Label as="span">Lock:</Label>
                    {locks.map(([name, icon]) => (
                      <IconButton key={name} type="button" aria-label={name}><svg width="12" height="12" viewBox="0 0 12 12">{icon}</svg></IconButton>
                    ))}
                  </Inline>
                  <Inline>
                    <Label htmlFor="fill">Fill:</Label>
                    <NumberBox><input id="fill" defaultValue="100%" /><button type="button" aria-label="Fill slider"><Down /></button></NumberBox>
                  </Inline>
                </LayerRow>
                <LayerList>
                  <LayerItem>
                    <EyeCell type="button" aria-label="Layer visibility">
                      <svg width="11" height="8" viewBox="0 0 11 8"><path d="M.5 4.500C3 .5 8 .5 10.500 4.500 8 7.500 3 7.500.5 4.500z" fill="#555" stroke={L} /><circle cx="5.500" cy="4" r="1.800" fill={L} /></svg>
                    </EyeCell>
                    <Thumb width="30" height="22" viewBox="0 0 30 22">
                      <path d="M.5 6V.5H9M21 .5h8.500V6M29.500 16v5.500H21M9 21.500H.5V16" fill="none" stroke="#f4f4f4" />
                      <rect x="2.500" y="2.500" width="25" height="16" fill="#fff" stroke="#333" />
                    </Thumb>
                    Layer 0
                  </LayerItem>
                </LayerList>
                <PanelFooter>
                  {footerIcons.map(([name, icon, dim]) => (
                    <IconButton key={name} type="button" aria-label={name} $dim={dim}><svg width="15" height="13" viewBox="0 0 15 13">{icon}</svg></IconButton>
                  ))}
                </PanelFooter>
              </Panel>
            </Panels>
          </DockRow>
        </Docks>
      </Workspace>
      <TaskbarEdge />
    </Window>
  )
}

export default App
